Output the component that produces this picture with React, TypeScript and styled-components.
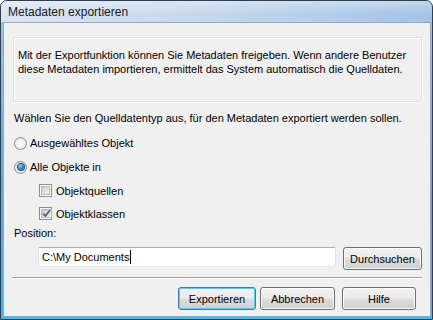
import React from "react";
import styled, { createGlobalStyle } from "styled-components";

const GlobalStyle = createGlobalStyle`
  html, body { margin: 0; padding: 0; background: #ffffff; }
  body { font-family: "Liberation Sans", Arial, sans-serif; }
  * { box-sizing: border-box; }
`;

const Window = styled.div`
  width: 433px;
  height: 320px;
  border: 1px solid #2f3f52;
  border-radius: 7px 7px 0 0;
  background: linear-gradient(to right, #dbe5f1 0%, #c6d8ed 45%, #a3c3e6 100%);
  display: flex;
  flex-direction: column;
  overflow: hidden;
`;

const TitleBar = styled.div`
  height: 21px;
  flex: none;
  display: flex;
  align-items: center;
  padding: 1px 0 0 7px;
  font-size: 12px;
  color: #1a1a1a;
  background: linear-gradient(to bottom, rgba(255,255,255,0.35), rgba(255,255,255,0) 60%);
`;

const Frame = styled.div`
  flex: 1;
  display: flex;
  padding: 0 2px 2px 2px;
  background: linear-gradient(to bottom, #9dc0e6 0%, #5aa6e2 60%, #35bfea 100%);
`;

const Body = styled.div`
  flex: 1;
  background: #f0f0f0;
  border: 1px solid #8fa9c6;
  display: flex;
  flex-direction: column;
  padding: 14px 8px 0 9px;
  font-size: 11px;
  color: #000;
  white-space: nowrap;
`;

const InfoBox = styled.div`
  height: 65px;
  border: 1px solid #d5dfe5;
  box-shadow: inset 1px 1px 0 #ffffff, 1px 1px 0 #ffffff;
  border-radius: 2px;
  padding: 10px 4px 0 4px;
  line-height: 14px;
`;

const Text = styled.div<{ $top?: number; $left?: number }>`
  margin-top: ${(p) => p.$top ?? 0}px;
  margin-left: ${(p) => p.$left ?? 0}px;
  line-height: 14px;
  height: 14px;
`;

const OptionRow = styled.div<{ $indent?: number; $h?: number; $top?: number }>`
  display: flex;
  align-items: center;
  height: ${(p) => p.$h ?? 24}px;
  margin-top: ${(p) => p.$top ?? 0}px;
  padding-left: ${(p) => p.$indent ?? 0}px;
  gap: 3px;
`;

const Radio = styled.span<{ $checked?: boolean }>`
  width: 13px;
  height: 13px;
  border-radius: 50%;
  border: 1px solid #8e8f8f;
  background: radial-gradient(circle at 50% 50%, #ffffff 0%, #f4f4f4 40%, #d2d2d2 100%);
  display: flex;
  align-items: center;
  justify-content: center;
  flex: none;
  &::after {
    content: "";
    display: ${(p) => (p.$checked ? "block" : "none")};
    width: 6px;
    height: 6px;
    border-radius: 50%;
    background: radial-gradient(circle at 40% 35%, #8fe0ff 0%, #2a8fd6 45%, #0b3f7a 100%);
    box-shadow: 0 0 0 1px #1b4f87;
  }
`;

const CheckBox = styled.span`
  width: 13px;
  height: 13px;
  border: 1px solid #8e8f8f;
  background: #fff;
  padding: 1px;
  flex: none;
  display: flex;
  margin-right: 1px;
`;

const CheckInner = styled.span`
  flex: 1;
  border: 1px solid #b8b8b8;
  background: linear-gradient(135deg, #cbcbcb 0%, #f4f4f4 100%);
  display: flex;
  align-items: center;
  justify-content: center;
`;

const InputRow = styled.div`
  display: flex;
  align-items: flex-start;
  margin-top: 7px;
  padding-left: 25px;
  gap: 7px;
`;

const Input = styled.div`
  width: 298px;
  height: 20px;
  background: #fff;
  border: 1px solid #abadb3;
  border-color: #abadb3 #dbdfe6 #e3e9ef #e2e3ea;
  border-radius: 2px;
  display: flex;
  align-items: center;
  padding-left: 3px;
`;

const Caret = styled.span`
  display: inline-block;
  width: 1px;
  height: 14px;
  background: #000;
  margin-left: 1px;
`;

const Button = styled.div<{ $w: number; $default?: boolean; $ml?: number }>`
  width: ${(p) => p.$w}px;
  height: 23px;
  margin-left: ${(p) => p.$ml ?? 0}px;
  border: 1px solid ${(p) => (p.$default ? "#3c7fb1" : "#707070")};
  border-radius: 3px;
  background: linear-gradient(to bottom, #f2f2f2 0%, #ebebeb 48%, #dddddd 52%, #cfcfcf 100%);
  box-shadow: inset 0 0 0 1px ${(p) => (p.$default ? "#48d0f7" : "#fbfbfb")};
  display: flex;
  align-items: center;
  justify-content: center;
  flex: none;
`;

const Separator = styled.div`
  height: 2px;
  margin: 7px 0 0 -1px;
  border-top: 1px solid #a0a0a0;
  border-bottom: 1px solid #ffffff;
`;

const ButtonBar = styled.div`
  display: flex;
  justify-content: flex-end;
  gap: 4px;
  margin-top: 8px;
  padding-right: 6px;
`;

const Check = () => (
  <svg width="9" height="9" viewBox="0 0 9 9">
    <path d="M1 4.5 L3.4 7 L8 1.2" fill="none" stroke="#4a5f97" strokeWidth="1.8" />
  </svg>
);

export default function App() {
  return (
    <>
      <GlobalStyle />
      <Window>
        <TitleBar>Metadaten exportieren</TitleBar>
        <Frame>
          <Body>
            <InfoBox>
              Mit der Exportfunktion können Sie Metadaten freigeben. Wenn andere Benutzer
              <br />
              diese Metadaten importieren, ermittelt das System automatisch die Quelldaten.
            </InfoBox>
            <Text $top={9} $left={1}>
              Wählen Sie den Quelldatentyp aus, für den Metadaten exportiert werden sollen.
            </Text>
            <OptionRow $indent={1} $top={6}>
              <Radio />
              Ausgewähltes Objekt
            </OptionRow>
            <OptionRow $indent={1}>
              <Radio $checked />
              Alle Objekte in
            </OptionRow>
            <OptionRow $indent={26} $h={23}>
              <CheckBox>
                <CheckInner />
              </CheckBox>
              Objektquellen
            </OptionRow>
            <OptionRow $indent={26} $h={23}>
              <CheckBox>
                <CheckInner>
                  <Check />
                </CheckInner>
              </CheckBox>
              Objektklassen
            </OptionRow>
            <Text $top={1} $left={1}>
              Position:
            </Text>
            <InputRow>
              <Input>
                C:\My Documents
                <Caret />
              </Input>
              <Button $w={79}>Durchsuchen</Button>
            </InputRow>
            <Separator />
            <ButtonBar>
              <Button $w={78} $default>
                Exportieren
              </Button>
              <Button $w={75}>Abbrechen</Button>
              <Button $w={74} $ml={3}>
                Hilfe
              </Button>
            </ButtonBar>
          </Body>
        </Frame>
      </Window>
    </>
  );
}
